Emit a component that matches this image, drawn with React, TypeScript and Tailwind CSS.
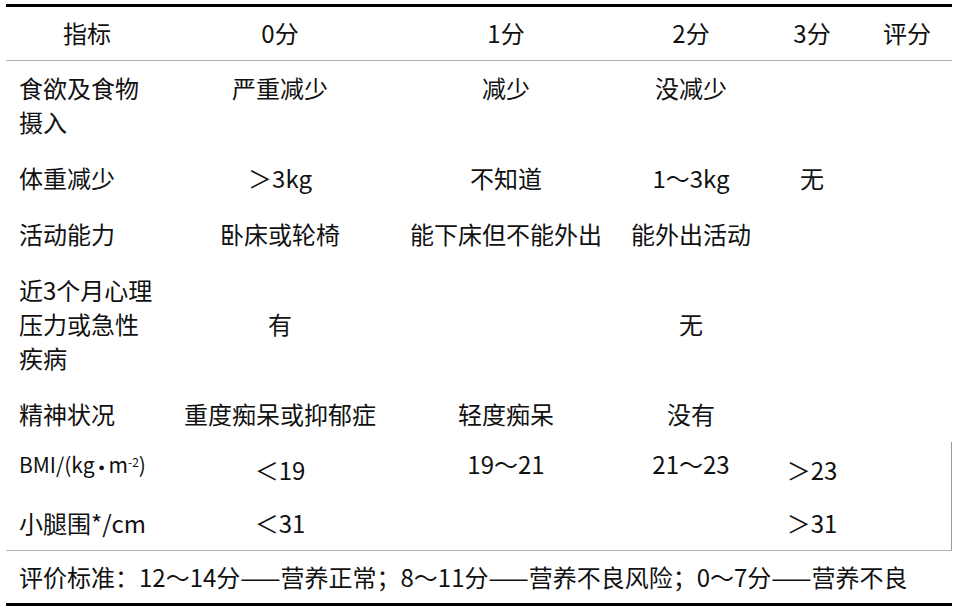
import React from "react";

const Row = ({ children, className = "" }: { children: React.ReactNode; className?: string }) => (
  <div className={"grid grid-cols-[162px_224px_228px_142px_100px_90px] " + className}>{children}</div>
);

export default function App() {
  return (
    <div className="w-[960px] h-[610px] bg-white pt-[4px] font-['Noto_Sans_CJK_SC','Noto_Sans',sans-serif] text-[#111]">
      <div className="ml-[6px] w-[946px] border-t-[3px] border-b-[3px] border-black text-[24px] leading-[34px]">
        {/* header */}
        <Row className="pt-[9px] pb-[10px] border-b border-[#b3b3b3] text-center">
          <div>指标</div>
          <div>0分</div>
          <div>1分</div>
          <div>2分</div>
          <div>3分</div>
          <div>评分</div>
        </Row>

        <Row className="pt-[10px] pb-[11px] items-start text-center">
          <div className="pl-[13px] text-left">
            <div>食欲及食物</div>
            <div>摄入</div>
          </div>
          <div>严重减少</div>
          <div>减少</div>
          <div>没减少</div>
          <div></div>
          <div></div>
        </Row>

        <Row className="py-[11px] text-center">
          <div className="pl-[13px] text-left">体重减少</div>
          <div>＞3kg</div>
          <div>不知道</div>
          <div>1～3kg</div>
          <div>无</div>
          <div></div>
        </Row>

        <Row className="py-[11px] text-center">
          <div className="pl-[13px] text-left">活动能力</div>
          <div>卧床或轮椅</div>
          <div>能下床但不能外出</div>
          <div>能外出活动</div>
          <div></div>
          <div></div>
        </Row>

        <Row className="py-[11px] items-center text-center">
          <div className="pl-[13px] text-left">
            <div>近3个月心理</div>
            <div>压力或急性</div>
            <div>疾病</div>
          </div>
          <div>有</div>
          <div></div>
          <div>无</div>
          <div></div>
          <div></div>
        </Row>

        <Row className="py-[11px] text-center">
          <div className="pl-[13px] text-left">精神状况</div>
          <div>重度痴呆或抑郁症</div>
          <div>轻度痴呆</div>
          <div>没有</div>
          <div></div>
          <div></div>
        </Row>

        <div className="border-r border-[#9a9a9a]">
          <Row className="items-start text-center pb-[9px]">
            <div className="pl-[13px] pt-[5px] text-left whitespace-nowrap text-[21px]">
              BMI/(kg<span className="font-['DejaVu_Sans'] text-[16px] px-[2px]">∙</span>m<sup className="text-[12px] leading-none">-2</sup>)
            </div>
            <div className="pt-[11px]">＜19</div>
            <div className="pt-[5px]">19～21</div>
            <div className="pt-[5px]">21～23</div>
            <div className="pt-[11px]">＞23</div>
            <div></div>
          </Row>
          <Row className="py-[10px] text-center">
            <div className="pl-[13px] text-left whitespace-nowrap">小腿围*/cm</div>
            <div>＜31</div>
            <div></div>
            <div></div>
            <div>＞31</div>
            <div></div>
          </Row>
        </div>

        <div className="border-t border-[#b3b3b3] pt-[9px] pb-[9px] pl-[13px] whitespace-nowrap">
          评价标准：12～14分——营养正常；8～11分——营养不良风险；0～7分——营养不良
        </div>
      </div>
    </div>
  );
}
